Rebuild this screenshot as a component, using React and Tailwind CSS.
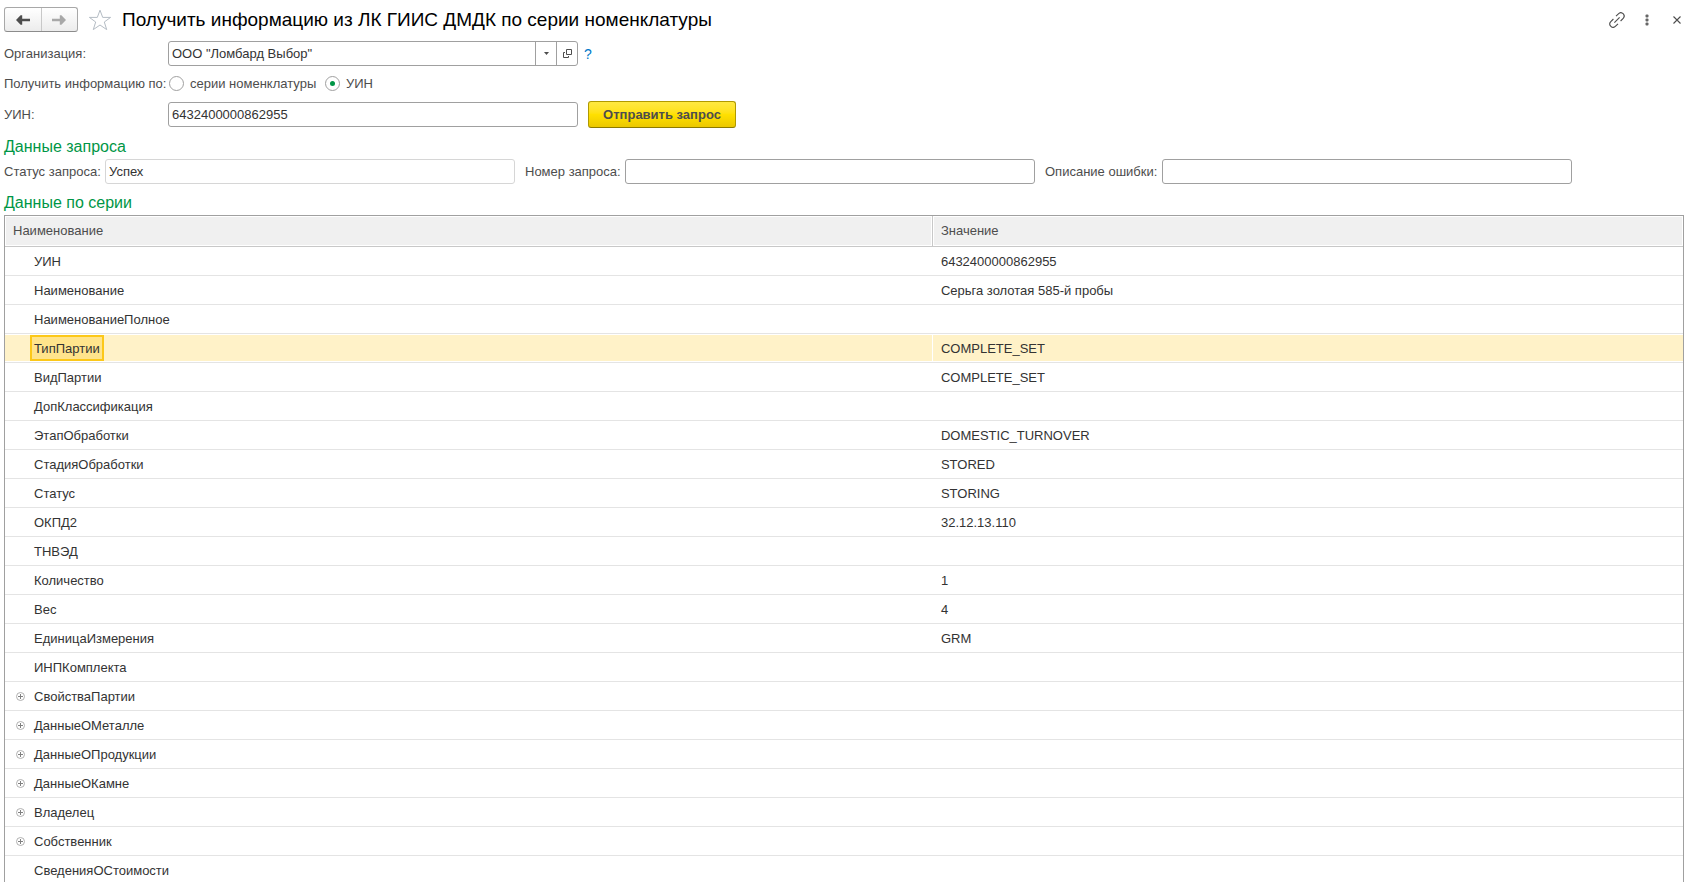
import React, { useState } from 'react';

const ROWS = [
  { name: 'УИН', value: '6432400000862955' },
  { name: 'Наименование', value: 'Серьга золотая 585-й пробы' },
  { name: 'НаименованиеПолное' },
  { name: 'ТипПартии', value: 'COMPLETE_SET' },
  { name: 'ВидПартии', value: 'COMPLETE_SET' },
  { name: 'ДопКлассификация' },
  { name: 'ЭтапОбработки', value: 'DOMESTIC_TURNOVER' },
  { name: 'СтадияОбработки', value: 'STORED' },
  { name: 'Статус', value: 'STORING' },
  { name: 'ОКПД2', value: '32.12.13.110' },
  { name: 'ТНВЭД' },
  { name: 'Количество', value: '1' },
  { name: 'Вес', value: '4' },
  { name: 'ЕдиницаИзмерения', value: 'GRM' },
  { name: 'ИНПКомплекта' },
  { name: 'СвойстваПартии', group: true },
  { name: 'ДанныеОМеталле', group: true },
  { name: 'ДанныеОПродукции', group: true },
  { name: 'ДанныеОКамне', group: true },
  { name: 'Владелец', group: true },
  { name: 'Собственник', group: true },
  { name: 'СведенияОСтоимости' },
];

const inputClass = 'h-[25px] w-[410px] rounded-[3px] border border-[#a0a0a0] bg-white px-[3px] text-[#333333] outline-none';

const ArrowIcon = ({ flip, color }) => (
  <svg width="14" height="10" viewBox="0 0 14 10" className={flip ? 'rotate-180' : ''} aria-hidden="true">
    <path d="M0 5 L4.6 0.3 H6.2 V3.8 H14 V6.2 H6.2 V9.7 H4.6 Z" fill={color} />
  </svg>
);

const StarIcon = () => (
  <svg width="24" height="22" viewBox="0 0 24 22" fill="none" stroke="#b4bcc4" aria-hidden="true">
    <path d="M12 1.2 L14.7 8.4 H22.6 L16.3 13 L18.7 20.6 L12 16 L5.3 20.6 L7.7 13 L1.4 8.4 H9.3 Z" />
  </svg>
);

const LinkIcon = () => (
  <svg width="16" height="16" viewBox="0 0 16 16" fill="none" stroke="#4d4d4d" strokeWidth="1.1" aria-hidden="true">
    <path d="M7 4.2 L9.4 1.8 A3.3 3.3 0 0 1 14.2 6.4 L11.6 9" />
    <path d="M4.4 7 L1.8 9.6 A3.3 3.3 0 0 0 6.6 14.2 L9 11.8" />
    <path d="M5.4 10.6 L10.6 5.4" />
  </svg>
);

const ExpandIcon = () => (
  <svg width="9" height="9" viewBox="0 0 9 9" fill="none" aria-hidden="true">
    <circle cx="4.5" cy="4.5" r="4" stroke="#b0b0b0" />
    <path d="M2 4.5 H7 M4.5 2 V7" stroke="#808080" />
  </svg>
);

const Radio = ({ label, checked, onChange, className = '' }) => (
  <label className={`flex items-center gap-1.5 ${className}`}>
    <input
      type="radio"
      name="searchBy"
      checked={checked}
      onChange={onChange}
      className="grid size-[15px] appearance-none place-items-center rounded-full border border-[#a0a0a0] bg-white before:size-[5px] before:rounded-full checked:before:bg-[#009646]"
    />
    {label}
  </label>
);

const SectionTitle = ({ children }) => (
  <h2 className="flex h-[31px] items-center pt-1.5 text-[16px] leading-5 text-[#009646]">{children}</h2>
);

export default function App() {
  const [organization, setOrganization] = useState('ООО "Ломбард Выбор"');
  const [searchBy, setSearchBy] = useState('uin');
  const [uin, setUin] = useState('6432400000862955');
  const [requestNumber, setRequestNumber] = useState('');
  const [errorText, setErrorText] = useState('');
  const [selected, setSelected] = useState('ТипПартии');

  return (
    <main className="flex h-screen flex-col overflow-hidden bg-white pt-[7px] pr-[18px] pl-1 font-['Liberation_Sans',Arial,sans-serif] text-[13px] leading-4 text-[#4d4d4d]">
      <header className="mb-[9px] flex h-[25px] shrink-0 items-center">
        <div className="flex h-[25px] w-[74px] rounded-[3px] border border-[#a8a8a8] border-b-[#8c8c8c] bg-linear-to-b from-white to-[#ececec]">
          <button type="button" aria-label="Назад" className="flex flex-1 items-center justify-center border-r border-[#c8c8c8]">
            <ArrowIcon color="#4d4d4d" />
          </button>
          <button type="button" aria-label="Вперед" className="flex flex-1 items-center justify-center">
            <ArrowIcon flip color="#a8a8a8" />
          </button>
        </div>
        <button type="button" aria-label="В избранное" className="ml-2.5">
          <StarIcon />
        </button>
        <h1 className="ml-2.5 text-[19px] leading-6 text-black">Получить информацию из ЛК ГИИС ДМДК по серии номенклатуры</h1>
        <div className="ml-auto flex items-center">
          <button type="button" aria-label="Ссылка">
            <LinkIcon />
          </button>
          <button type="button" aria-label="Еще" className="ml-5">
            <svg width="4" height="12" viewBox="0 0 4 12" fill="#666666" aria-hidden="true">
              <rect x="0.5" y="0.5" width="3" height="3" rx="1" />
              <rect x="0.5" y="4.5" width="3" height="3" rx="1" />
              <rect x="0.5" y="8.5" width="3" height="3" rx="1" />
            </svg>
          </button>
          <button type="button" aria-label="Закрыть" className="mr-[3px] ml-6">
            <svg width="8" height="8" viewBox="0 0 8 8" stroke="#4d4d4d" strokeWidth="1.1" aria-hidden="true">
              <path d="M0.5 0.5 L7.5 7.5 M7.5 0.5 L0.5 7.5" />
            </svg>
          </button>
        </div>
      </header>

      <div className="flex shrink-0 items-center">
        <label htmlFor="organization" className="w-[164px]">Организация:</label>
        <div className="flex h-[25px] w-[410px] rounded-[3px] border border-[#a0a0a0] bg-white">
          <input
            id="organization"
            value={organization}
            onChange={(e) => setOrganization(e.target.value)}
            className="min-w-0 flex-1 px-[3px] text-[#333333] outline-none"
          />
          <button type="button" aria-label="Выбрать из списка" className="flex w-[21px] items-center justify-center border-l border-[#a0a0a0]">
            <svg width="5" height="3" viewBox="0 0 5 3" fill="#4d4d4d" aria-hidden="true">
              <path d="M0 0 H5 L2.5 3 Z" />
            </svg>
          </button>
          <button type="button" aria-label="Открыть" className="flex w-[21px] items-center justify-center border-l border-[#a0a0a0]">
            <svg width="9" height="9" viewBox="0 0 9 9" fill="none" stroke="#4d4d4d" aria-hidden="true">
              <path d="M3.5 0.5 H8.5 V5.5 H3.5 Z" />
              <path d="M2 3.5 H0.5 V8.5 H5.5 V7" />
            </svg>
          </button>
        </div>
        <button type="button" aria-label="Справка" className="ml-1.5 text-[14px] text-[#0078c8]">?</button>
      </div>

      <div role="radiogroup" aria-labelledby="search-by" className="flex h-[35px] shrink-0 items-center">
        <span id="search-by" className="w-[165px] whitespace-nowrap">Получить информацию по:</span>
        <Radio label="серии номенклатуры" checked={searchBy === 'series'} onChange={() => setSearchBy('series')} className="w-[156px] whitespace-nowrap" />
        <Radio label="УИН" checked={searchBy === 'uin'} onChange={() => setSearchBy('uin')} />
      </div>

      <div className="flex shrink-0 items-center">
        <label htmlFor="uin" className="w-[164px]">УИН:</label>
        <input id="uin" value={uin} onChange={(e) => setUin(e.target.value)} className={inputClass} />
        <button type="button" className="ml-2.5 h-[27px] w-[148px] rounded-[3px] border border-[#b09a00] border-b-[#8c7a00] bg-linear-to-b from-[#ffe941] via-[#ffe000] to-[#ecc800] font-bold whitespace-nowrap">
          Отправить запрос
        </button>
      </div>

      <SectionTitle>Данные запроса</SectionTitle>
      <div className="flex shrink-0 items-center whitespace-nowrap">
        <label htmlFor="status" className="w-[101px]">Статус запроса:</label>
        <input id="status" readOnly value="Успех" className="h-[25px] w-[410px] rounded-[3px] border border-[#d6d6d6] bg-white px-[3px] text-[#333333] outline-none" />
        <label htmlFor="request-number" className="ml-2.5 w-[100px]">Номер запроса:</label>
        <input id="request-number" value={requestNumber} onChange={(e) => setRequestNumber(e.target.value)} className={inputClass} />
        <label htmlFor="error-text" className="ml-2.5 w-[117px]">Описание ошибки:</label>
        <input id="error-text" value={errorText} onChange={(e) => setErrorText(e.target.value)} className={inputClass} />
      </div>

      <SectionTitle>Данные по серии</SectionTitle>
      <div className="min-h-0 flex-1 overflow-hidden border border-b-0 border-[#a0a0a0]">
        <table className="w-full table-fixed border-separate border-spacing-0 text-left">
          <colgroup>
            <col className="w-[55.3%]" />
            <col />
          </colgroup>
          <thead>
            <tr className="text-[#4d4d4d]">
              <th scope="col" className="h-[31px] border-r border-b border-[#c8c8c8] p-px font-normal">
                <div className="flex h-7 items-center bg-[#f0f0f0] pl-[7px]">Наименование</div>
              </th>
              <th scope="col" className="h-[31px] border-b border-[#c8c8c8] p-px font-normal">
                <div className="flex h-7 items-center bg-[#f0f0f0] pl-[7px]">Значение</div>
              </th>
            </tr>
          </thead>
          <tbody className="text-[#333333]">
            {ROWS.map((row) => {
              const active = row.name === selected;
              return (
                <tr key={row.name} onClick={() => setSelected(row.name)}>
                  <td className="h-[29px] border-b border-[#e4e4e4] py-px pr-px">
                    <div className={`flex h-[26px] items-center ${active ? 'bg-[#fff2c8]' : ''}`}>
                      <span className="flex w-[25px] shrink-0 justify-center pl-1.5">
                        {row.group && (
                          <button type="button" aria-label={`Развернуть ${row.name}`}>
                            <ExpandIcon />
                          </button>
                        )}
                      </span>
                      <span className={`flex h-[26px] items-center border-2 px-0.5 pt-0.5 ${active ? 'border-[#fcc819] bg-[#ffe48c]' : 'border-transparent'}`}>
                        {row.name}
                      </span>
                    </div>
                  </td>
                  <td className="h-[29px] border-b border-[#e4e4e4] py-px">
                    <div className={`flex h-[26px] items-center pt-0.5 pl-2 ${active ? 'bg-[#fff2c8]' : ''}`}>{row.value}</div>
                  </td>
                </tr>
              );
            })}
          </tbody>
        </table>
      </div>
    </main>
  );
}
